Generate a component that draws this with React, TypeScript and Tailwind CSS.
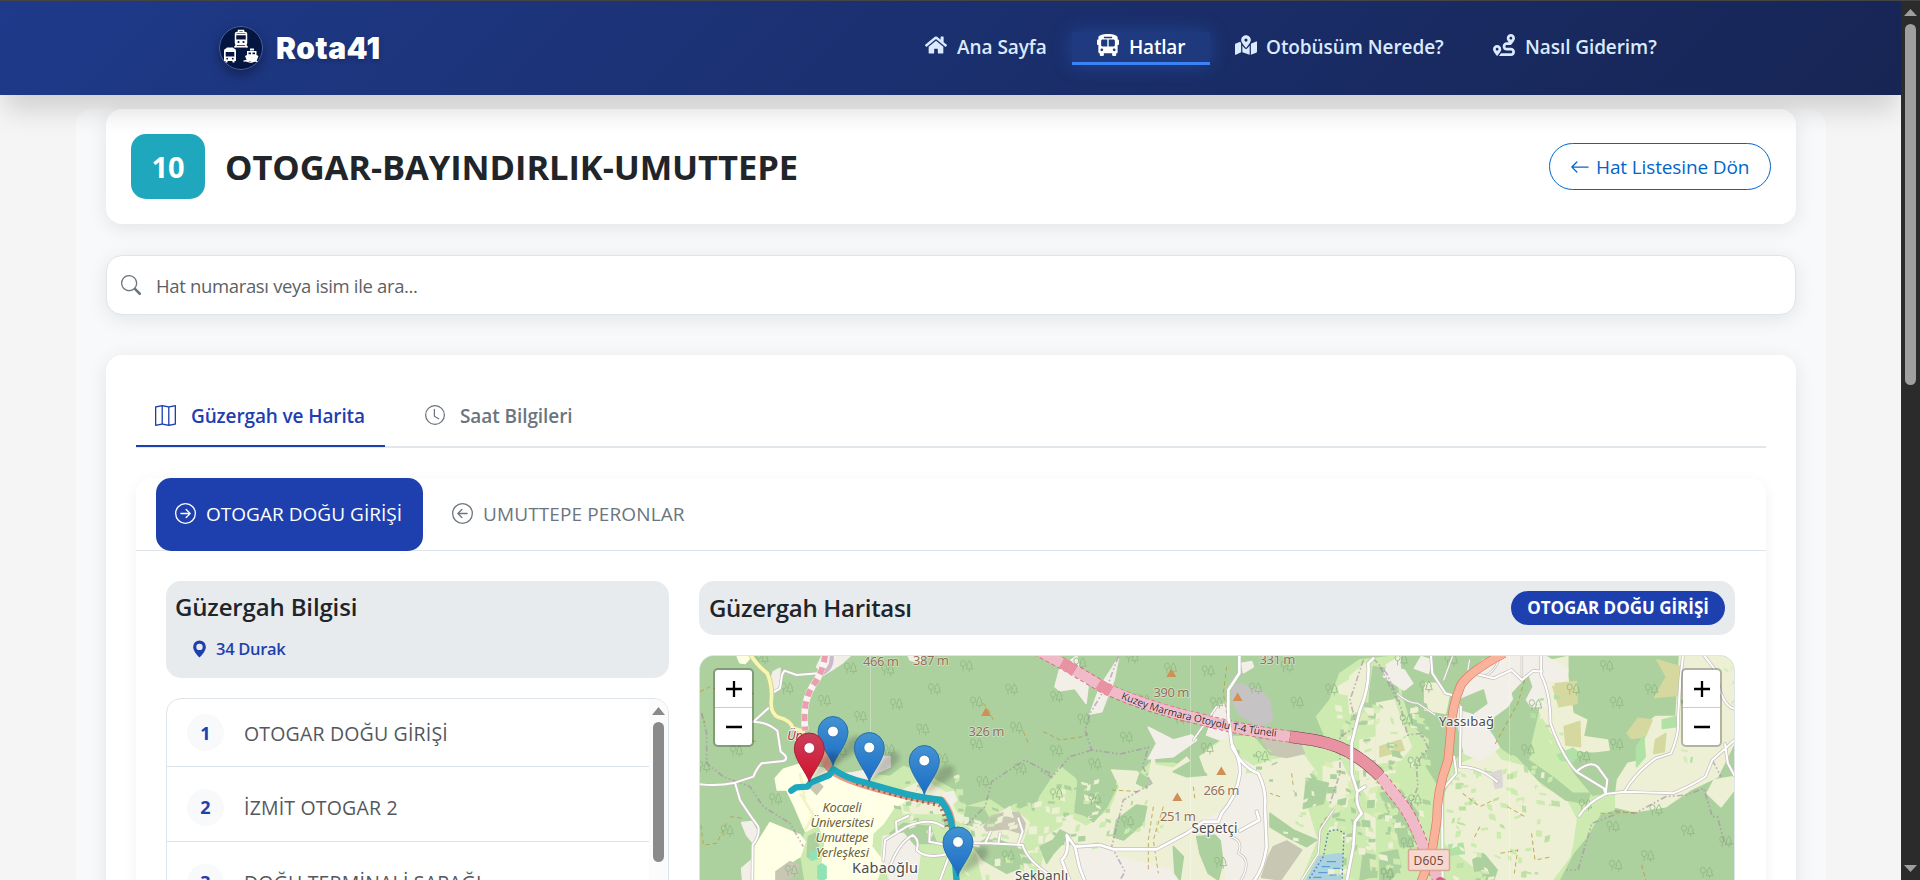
import React from "react";
import { FaHome, FaBusAlt, FaMapMarkedAlt, FaRoute } from "react-icons/fa";
import {
  BsArrowLeft,
  BsSearch,
  BsMap,
  BsClock,
  BsArrowRightCircle,
  BsArrowLeftCircle,
  BsGeoAltFill,
} from "react-icons/bs";

type Poly = [string, string];
type Pt = [number, number];

const WEST = "translate(690 560) scale(0.33333)";
const MID = "translate(1040 640) scale(0.33333)";
const EAST = "translate(1380 560) scale(0.34438 0.33333)";

const FARM = "#eef0d5";
const LIME = "#cdebb0";
const WOOD = "#add19e";
const HOUSE = "#f2efe9";
const CAMPUS = "#ffffe5";
const SCRUB = "#d6d99f";
const STONE = "#c7c7b4";

const landWest: Poly[] = [
  [LIME, "440,655 520,640 600,650 640,620 700,640 790,690 830,740 900,720 960,760 1010,740 1080,800 1110,960 560,960 540,760"],
  [FARM, "620,700 700,660 770,700 800,760 880,790 960,740 1010,780 1080,850 1100,960 880,960 840,800 760,760 640,760"],
  [WOOD, "830,740 880,745 900,780 860,800 820,790"],
  [WOOD, "900,830 980,860 1000,920 950,940 880,900 850,860"],
  [WOOD, "600,820 640,790 720,800 740,850 690,850 620,880"],
  [CAMPUS, "256,655 280,628 330,612 400,625 440,640 480,640 560,672 620,700 645,722 610,745 580,790 548,820 545,860 580,905 560,960 345,960 350,890 375,870 340,800 312,735 290,690 262,690"],
  [LIME, "345,820 385,800 400,850 385,960 345,960 330,870"],
  [WOOD, "355,830 375,820 385,860 370,900 352,890"],
  [CAMPUS, "195,860 240,788 330,825 345,845 330,890 275,925 258,960 195,960"],
  [HOUSE, "250,335 270,325 268,380 248,392 242,360"],
  [HOUSE, "155,788 185,785 205,820 190,850 170,825"],
  [HOUSE, "155,925 185,900 190,960 158,960"],
  [HOUSE, "395,290 480,288 455,310 425,330 400,345 380,320"],
  [HOUSE, "655,288 700,288 690,308 660,300"],
  [HOUSE, "480,640 530,630 560,590 600,590 600,620 560,640 530,665 490,660"],
  [HOUSE, "580,830 640,820 690,880 680,960 600,960 575,900"],
  [HOUSE, "760,700 790,695 800,720 780,740"],
  [STONE, "882,800 905,768 980,748 1005,790 1000,822 950,806 890,812"],
  [STONE, "258,935 300,905 325,915 320,945 285,960 258,960"],
  [STONE, "358,680 385,668 398,680 380,703"],
  ["#8fe3b4", "360,878 380,872 382,895 362,900"],
  ["#8fe3b4", "384,918 396,912 408,920 408,955 396,960 384,955"],
  [CAMPUS, "142,290 185,288 165,310 150,308"],
];

const landMid: Poly[] = [
  [LIME, "0,470 60,380 110,420 100,520 160,540 200,470 230,430 300,400 330,370 400,370 500,400 500,330 560,290 640,290 690,350 800,300 860,300 830,230 870,180 900,100 960,60 1080,47 1100,720 0,720 -60,640"],
  [FARM, "140,560 210,510 240,440 215,390 290,395 325,425 340,335 345,375 400,385 440,352 470,395 500,405 480,350 515,325 565,290 580,340 640,380 700,360 790,345 830,400 800,500 830,600 780,720 0,720 20,590 100,540"],
  [FARM, "930,110 975,70 985,120 960,210 930,220 925,160"],
  [FARM, "895,140 930,120 930,165 900,160"],
  [FARM, "960,300 1020,290 1060,330 1080,420 1080,520 1000,500 960,430"],
  [FARM, "850,380 900,360 930,420 920,500 870,500 850,440"],
  [FARM, "975,520 1050,560 1070,640 1020,650 980,600"],
  [WOOD, "105,390 180,350 230,440 200,500 160,545 105,500 120,450"],
  [WOOD, "400,395 460,360 500,405 440,410"],
  [WOOD, "300,400 330,420 320,445 290,430"],
  [WOOD, "470,590 540,585 555,640 535,720 505,700 480,640"],
  [WOOD, "800,415 865,430 850,490 790,505"],
  [WOOD, "690,520 760,570 830,600 800,620 740,590 690,560"],
  [WOOD, "1000,80 1060,90 1075,160 1040,240 985,230 990,150"],
  [WOOD, "230,540 290,495 320,500 310,550 250,600 220,590"],
  [WOOD, "970,640 1020,650 1030,700 960,720"],
  [WOOD, "0,620 40,600 60,570 90,585 40,640 20,670"],
  [WOOD, "400,620 430,650 420,720 405,700"],
  [HOUSE, "45,140 60,85 110,48 120,100 145,130 138,190 105,145 60,152"],
  [HOUSE, "150,222 180,140 235,55 222,120 185,215"],
  [HOUSE, "325,262 400,300 455,285 470,300 435,325 400,350 325,357 350,310"],
  [HOUSE, "500,285 530,200 560,190 570,290 540,300"],
  [HOUSE, "605,70 635,65 640,80 610,98"],
  [HOUSE, "590,350 640,380 665,420 670,480 665,560 680,640 650,720 560,720 545,600 490,540 540,520 595,450"],
  [HOUSE, "110,620 215,630 230,650 390,690 410,720 125,720"],
  [HOUSE, "1040,75 1080,50 1080,140 1050,120"],
  ["#c5c3c3", "575,140 600,133 660,150 690,185 697,240 660,260 600,225 580,190"],
  [STONE, "665,300 780,310 793,340 740,352 700,345"],
  [STONE, "700,620 740,603 785,630 722,720 665,712 685,650"],
  [STONE, "980,365 1045,358 1050,375 1000,385"],
  [SCRUB, "1020,320 1070,300 1080,330 1040,350"],
  ["#aad3df", "838,650 906,640 900,720 800,720"],
];

const landEast: Poly[] = [
  [LIME, "-10,470 60,400 90,500 140,540 130,620 190,720 200,620 260,560 340,560 380,590 440,560 470,430 520,560 560,640 600,690 640,740 600,800 560,880 520,960 -10,960"],
  [FARM, "-10,430 40,420 60,480 90,560 60,600 -10,610"],
  [FARM, "190,700 240,610 330,570 350,600 420,620 470,680 540,720 575,790 550,890 500,960 320,960 190,850"],
  [FARM, "455,440 480,380 500,300 545,290 545,350 560,460 600,480 590,530 660,540 665,570 620,575 540,570 500,520"],
  [FARM, "680,740 690,660 720,610 765,600 775,490 800,470 860,470 870,288 1028,288 1028,550 980,650 900,690 830,740 740,755"],
  [FARM, "130,370 170,370 200,410 190,460 130,450"],
  [HOUSE, "20,320 70,330 95,370 70,390 10,350"],
  [HOUSE, "100,325 120,290 150,300 140,340"],
  [HOUSE, "215,440 225,400 250,350 300,300 360,288 480,288 545,330 540,360 490,380 490,440 440,440 400,390 370,440 330,470 315,510 350,560 290,600 245,580"],
  [WOOD, "230,420 300,390 310,430 270,460 240,450"],
  [WOOD, "385,400 430,350 440,380 420,420 445,460 420,470 395,440"],
  [WOOD, "330,520 380,510 440,560 430,600 500,650 560,700 610,700 600,730 540,720 460,660 400,590 350,560"],
  [WOOD, "560,600 610,610 680,590 660,680 600,650"],
  [WOOD, "1,700 60,690 110,760 100,820 120,860 60,860 40,790"],
  [WOOD, "0,880 50,870 60,920 30,960 0,960"],
  [WOOD, "270,900 300,880 340,930 330,960 280,960"],
  [SCRUB, "805,300 870,320 872,405 798,412 832,350"],
  [SCRUB, "718,520 750,475 790,480 770,530 730,535"],
  [SCRUB, "500,372 570,365 572,430 520,440"],
  [SCRUB, "535,500 580,485 582,560 540,555"],
  [SCRUB, "0,560 60,540 70,570 0,590"],
  [SCRUB, "800,540 830,520 825,575 795,580"],
  ["#b0e2a5", "515,585 560,565 580,580 560,605 525,600"],
  ["#b0e2a5", "745,560 765,530 770,590 745,620"],
  ["#b0e2a5", "820,480 860,470 860,500 820,505"],
  ["#b0e2a5", "200,855 240,850 245,880 205,885"],
  ["#dcd6d6", "325,640 352,630 355,680 335,685"],
  [FARM, "970,660 1028,650 1028,690 990,740 950,700"],
  [LIME, "575,770 620,710 680,700 680,750 640,760 600,830 560,880"],
];

const roadsWest = [
  "M190,485L235,445",
  "M190,485Q230,485 262,512L272,575Q300,595 280,603L215,610Q200,625 190,650L135,668Q80,680 25,672",
  "M135,668L150,720Q175,760 205,800Q210,830 188,855L187,965",
  "M245,400L270,385L276,345L283,332L320,345L385,340",
  "M600,920Q625,850 668,825Q690,840 680,870Q710,900 780,880L810,850",
  "M810,850L900,850L998,855Q1010,900 1080,945",
  "M580,900L585,840L650,800Q720,770 760,800",
  "M620,815L618,785L655,768",
  "M720,800L718,845L770,855",
  "M885,850L902,815M925,850L930,820M985,850L998,815L985,775",
  "M780,880L750,960",
];
const roadsMid = [
  "M598,47L598,100L565,150L565,230L575,310Q602,360 600,400Q590,470 545,520L535,545L490,545L440,580L350,628L220,628L180,615L105,620L80,585Q90,640 65,660L90,725",
  "M105,620L118,680L135,725",
  "M575,320Q610,385 655,400Q680,450 675,500L680,620Q670,690 640,725",
  "M650,515L658,540L600,572",
  "M1000,55L985,70Q990,140 960,210L935,310L935,400L952,455Q945,490 965,520L945,545L940,620L920,725",
  "M952,455L975,440",
];
const roadsMidThin = [
  "M880,510L840,570L835,640L782,725",
  "M570,590Q612,600 595,640Q640,660 600,725",
  "M460,300L530,200",
];
const roadsEast = [
  "M468,285L468,345Q495,400 495,490Q530,590 570,635L650,685L655,702Q600,730 578,768",
  "M570,635Q610,600 632,620L660,660L655,702L710,695L760,697L850,700Q900,680 945,650L965,600L1030,540",
  "M710,695Q740,640 800,595L845,580Q870,520 865,480L872,360L880,285",
  "M940,285L970,325L990,400Q1005,440 1030,447",
  "M1002,552L1010,610L1030,648",
  "M148,285L152,340L190,400L208,405",
  "M270,340L330,355L382,330L412,360L445,332L470,335",
  "M235,440L232,620Q290,620 340,665",
  "M215,590L222,640L180,690L182,965",
];
const roadsEastThin = [
  "M260,300L255,330M412,285L412,350M345,300Q330,340 300,350",
  "M210,290L185,360M50,400Q80,430 110,430L160,465",
];

const boundaries: [string, string][] = [
  [WEST, "M35,460L50,520L50,610L100,650L180,680L220,740L300,790L340,860"],
  [WEST, "M1080,640L1005,600L905,665L885,740L830,795"],
  [MID, "M235,50L205,130L150,220L135,270L155,330L240,342L325,322L308,380L335,430L250,480L235,540L215,620L255,695L240,720"],
  [MID, "M155,330L90,350L35,412L0,390"],
  [MID, "M970,60L930,180L950,260L900,290L900,400L870,490"],
  [MID, "M1000,55L1040,100L1080,190"],
  [EAST, "M0,320L60,440L80,525L120,520L140,565L105,610L110,680L80,760"],
  [EAST, "M680,752L740,760L830,710L890,705L940,685L965,770L980,770L1000,850L1028,850"],
  [EAST, "M680,765L615,790L575,930L540,930"],
  [EAST, "M965,600L990,650"],
];
const tracks: [string, string][] = [
  [WEST, "M30,395L60,380L110,400L125,470L160,460M130,360L170,400L200,400M140,500L170,540L200,545M35,460L45,490M120,770L160,775M110,790L80,850L40,855L32,790"],
  [WEST, "M880,430L895,450L910,480M1000,515L1015,550"],
  [MID, "M10,275L60,300L130,290L150,275M560,80L550,160L560,220M340,500L325,600L325,690M370,500L340,600L355,700M215,450L300,455M460,440L465,480M755,400L760,440M720,470L690,460M860,530L840,560"],
  [EAST, "M240,700L290,740L330,720M350,880L400,870L390,940M440,820L450,900L500,890M290,800L270,840M370,740L420,770M760,915L772,960M640,760L740,757M420,360L400,430L330,560"],
];

const treesWest: Pt[] = [[480,325],[592,330],[290,385],[402,422],[510,470],[618,432],[732,387],[828,318],[858,427],[963,388],[697,508],[978,503],[858,553],[755,597],[877,665],[990,627],[255,717],[110,812],[138,573],[953,888],[303,932],[595,570],[450,575],[40,620],[215,295]];
const treesMid: Pt[] = [[48,170],[130,238],[48,332],[258,292],[503,93],[390,85],[770,187],[873,148],[163,372],[163,478],[48,462],[262,545],[528,188],[500,325],[665,350],[740,80],[540,668],[1040,703],[275,52],[118,70],[420,235],[310,180],[645,145]];
const treesEast: Pt[] = [[657,318],[686,427],[787,388],[560,388],[686,553],[428,570],[98,607],[675,800],[683,917],[776,888],[892,812],[947,938],[1003,845],[800,750],[132,380],[75,480],[595,735],[450,435],[590,590],[100,720],[78,850],[20,940],[60,300],[205,300]];

function rng(seed: number) {
  let s = seed;
  return () => {
    s = (s * 16807) % 2147483647;
    return s / 2147483647;
  };
}

type Zone = { x: number; y: number; w: number; h: number; n: number; size: number; colors: string[] };
const zones: Zone[] = [
  { x: 1325, y: 700, w: 66, h: 180, n: 130, size: 8, colors: [LIME, FARM, WOOD, "#dcecb8", WOOD, FARM] },
  { x: 1388, y: 700, w: 38, h: 180, n: 60, size: 7, colors: [LIME, FARM, WOOD, LIME] },
  { x: 1446, y: 765, w: 110, h: 115, n: 120, size: 7, colors: [LIME, FARM, LIME, "#bfe0a4", FARM] },
  { x: 1235, y: 740, w: 40, h: 40, n: 14, size: 6, colors: [LIME, WOOD] },
  { x: 1280, y: 760, w: 40, h: 80, n: 22, size: 5, colors: [LIME, FARM, WOOD] },
  { x: 1045, y: 775, w: 55, h: 70, n: 40, size: 7, colors: [LIME, FARM, WOOD] },
  { x: 1105, y: 800, w: 60, h: 40, n: 14, size: 5, colors: [LIME, "#b9dba1"] },
  { x: 955, y: 800, w: 90, h: 78, n: 60, size: 8, colors: [LIME, FARM, WOOD, FARM] },
  { x: 893, y: 775, w: 70, h: 60, n: 30, size: 7, colors: [LIME, WOOD, FARM] },
  { x: 1680, y: 665, w: 54, h: 100, n: 22, size: 6, colors: ["#d2ecbd", "#e3eecb", "#b0e2a5"] },
  { x: 1530, y: 680, w: 30, h: 60, n: 14, size: 5, colors: [LIME, "#b0e2a5", FARM] },
];
const patches = zones.flatMap((z, zi) => {
  const r = rng(71 + zi * 137);
  return Array.from({ length: z.n }, () => {
    const x = z.x + r() * z.w;
    const y = z.y + r() * z.h;
    const a = z.size * (0.4 + r() * 0.8);
    const b = z.size * (0.3 + r() * 0.7);
    const k = (r() - 0.5) * 5;
    const fill = z.colors[Math.floor(r() * z.colors.length)];
    return { fill, pts: `${x},${y} ${x + a},${y + k} ${x + a + k * 0.6},${y + b + k} ${x + k * 0.5},${y + b}` };
  });
});

function Land({ at, items }: { at: string; items: Poly[] }) {
  return (
    <g transform={at}>
      {items.map(([fill, pts], i) => (
        <polygon key={i} points={pts} fill={fill} stroke={fill} strokeWidth={5} strokeLinejoin="round" />
      ))}
    </g>
  );
}

function Roads({ at, items, w }: { at: string; items: string[]; w: number }) {
  const d = items.join("");
  return (
    <g transform={at} fill="none" strokeLinejoin="round" strokeLinecap="round">
      <path d={d} stroke="#c3beb9" strokeWidth={w + 4} />
      <path d={d} stroke="#ffffff" strokeWidth={w} />
    </g>
  );
}

function Trees({ at, items }: { at: string; items: Pt[] }) {
  return (
    <g transform={at} fill="none" stroke="#8fb783" strokeWidth={2.4} strokeLinejoin="round">
      {items.map(([x, y], i) => (
        <g key={i} transform={`translate(${x} ${y})`}>
          <ellipse cx={-9} cy={-7} rx={7.5} ry={9} />
          <path d="M-9,2V16M10,-17L2,-2L5,-2L0,9L20,9L15,-2L18,-2ZM10,9V18" />
        </g>
      ))}
    </g>
  );
}

function Pin({ x, y, red }: { x: number; y: number; red?: boolean }) {
  return (
    <g transform={`translate(${x} ${y})`}>
      <path d="M0 0L12 -22Q20 -33 29 -28Q33 -20 20 -12Z" fill="#222222" opacity="0.24" filter="url(#pinShade)" />
      <path
        d="M0 0C-1.800 -8 -15 -22 -15 -33.500A15 15.500 0 0 1 15 -33.500C15 -22 1.800 -8 0 0Z"
        fill={red ? "url(#pinRed)" : "url(#pinBlue)"}
        stroke={red ? "#a8213b" : "#2b6fa8"}
        strokeWidth="1"
      />
      <circle cx="0" cy="-34" r="5.400" fill="#ffffff" stroke={red ? "#a8213b" : "#2467a3"} strokeWidth="0.800" />
    </g>
  );
}

function Peak({ x, y }: { x: number; y: number }) {
  return <path d={`M${x - 5},${y + 4}L${x},${y - 4.5}L${x + 5},${y + 4}Z`} fill="#d08f55" />;
}

const heights: [string, number, number, number][] = [
  ["466 m", 881, 666, 36],
  ["387 m", 931, 665, 36],
  ["326 m", 986.5, 736, 36],
  ["390 m", 1171.5, 696.500, 36],
  ["331 m", 1277.5, 664, 36],
  ["266 m", 1221.5, 794.500, 36],
  ["251 m", 1178, 820.500, 36],
];

function RouteMap() {
  const tunnel = "M-45,8L0,34L85,80L195,145Q330,205 480,237Q600,270 750,290L820,300Q900,315 950,350Q985,372 1020,408L1082,486Q1120,535 1150,620L1185,700L1220,760";
  return (
    <svg viewBox="700 656 1034 224" className="block h-[224px] w-[1034px]">
      <defs>
        <linearGradient id="pinBlue" x1="0" y1="0" x2="0" y2="1">
          <stop offset="0" stopColor="#4393d3" />
          <stop offset="1" stopColor="#1a6cc4" />
        </linearGradient>
        <linearGradient id="pinRed" x1="0" y1="0" x2="0" y2="1">
          <stop offset="0" stopColor="#c9405a" />
          <stop offset="1" stopColor="#d4102d" />
        </linearGradient>
        <filter id="pinShade" x="-50%" y="-50%" width="200%" height="200%">
          <feGaussianBlur stdDeviation="2.500" />
        </filter>
        <path id="tunnelLabel" d="M242,176Q350,222 480,248Q600,280 740,294" />
      </defs>
      <rect x="700" y="656" width="1034" height="224" fill={WOOD} />
      <Land at={WEST} items={landWest} />
      <Land at={MID} items={landMid} />
      <Land at={EAST} items={landEast} />
      {patches.map((p, i) => (
        <polygon key={i} points={p.pts} fill={p.fill} />
      ))}
      <Trees at={WEST} items={treesWest} />
      <Trees at={MID} items={treesMid} />
      <Trees at={EAST} items={treesEast} />
      {tracks.map(([at, d], i) => (
        <path key={i} transform={at} d={d} fill="none" stroke="#b99a3c" strokeWidth={3} strokeDasharray="13 9" opacity="0.8" />
      ))}
      {boundaries.map(([at, d], i) => (
        <path key={i} transform={at} d={d} fill="none" stroke="#a48aa8" strokeWidth={5} strokeDasharray="18 7 5 7 5 7" opacity="0.6" />
      ))}

      <g transform={MID} fill="none">
        <path d="M802,725L850,650L865,575L888,568L912,578L906,725" stroke="#5a74c8" strokeWidth={4} strokeDasharray="5 7" />
        <path d="M860,665H888M845,680H870M880,685H900M835,698H862M868,705H890M820,712H845" stroke="#4a90d8" strokeWidth={3} />
      </g>

      <Roads at={WEST} items={roadsWest} w={6} />
      <Roads at={MID} items={roadsMidThin} w={4} />
      <Roads at={EAST} items={roadsEastThin} w={3} />
      <g transform={WEST} fill="none" strokeLinejoin="round">
        <path d="M182,285Q200,315 232,340Q248,380 244,420Q240,460 265,472Q300,480 310,505L345,515" stroke="#c9c88a" strokeWidth={15} />
        <path d="M182,285Q200,315 232,340Q248,380 244,420Q240,460 265,472Q300,480 310,505L345,515" stroke="#f6f6b5" strokeWidth={11} />
        <path d="M425,288Q428,330 390,342" stroke="#c9b9c9" strokeWidth={12} />
        <path d="M405,285Q400,335 370,375Q335,425 346,512" stroke="#fbf3f3" strokeWidth={20} />
        <path d="M405,285Q400,335 370,375Q335,425 346,512" stroke="#eb9fae" strokeWidth={18} strokeDasharray="22 16" />
        <path d="M395,560Q400,620 440,640Q480,665 600,695Q700,720 755,722Q785,760 785,800" stroke="#e79a84" strokeWidth={24} />
        <path d="M330,700L370,765L345,812M330,640L345,720" stroke="#f3f3c8" strokeWidth={8} />
      </g>

      <g transform={MID} fill="none" strokeLinejoin="round">
        <path d={tunnel} stroke="#d9657f" strokeWidth={36} strokeDasharray="12 8" />
        <path d={tunnel} stroke="#f1bac8" strokeWidth={31} />
        <path d="M750,290L820,300Q900,315 950,350Q985,372 1020,408" stroke="#6f4450" strokeWidth={37} />
        <path d="M65,68L105,92M175,132L212,154M750,290L820,300Q900,315 950,350Q985,372 1020,408" stroke="#e892a2" strokeWidth={34} />
      </g>
      <Roads at={MID} items={roadsMid} w={8} />
      <Roads at={EAST} items={roadsEast} w={6} />
      <g transform={EAST} fill="none">
        <path d="M360,280Q260,335 235,375Q208,440 205,520L198,600Q165,690 165,780L150,880L120,965" stroke="#dc7b62" strokeWidth={27} />
        <path d="M360,280Q260,335 235,375Q208,440 205,520L198,600Q165,690 165,780L150,880L120,965" stroke="#f9b29c" strokeWidth={23} />
        <circle cx={175} cy={965} r={14} fill="#e05c85" />
      </g>
      <path d="M870.500 656V880M1190.500 656V880M1509.500 656V880" stroke="#ffffff" strokeWidth="0.700" opacity="0.4" />

      <g fontFamily="'Noto Sans', 'Open Sans', sans-serif" textAnchor="middle" paintOrder="stroke" strokeLinejoin="round">
        {[[986, 712], [1171.3, 673], [1237.6, 697], [1221.3, 771], [1177.3, 797]].map(([x, y]) => (
          <Peak key={x} x={x} y={y} />
        ))}
        {heights.map(([t, x, y, w]) => (
          <text key={t} x={x} y={y} fontSize="13" textLength={w} fill="#946f5b" stroke="#ffffff" strokeOpacity="0.45" strokeWidth="1.500">
            {t}
          </text>
        ))}
        <text x="795" y="740" fontSize="12.500" fontStyle="italic" fill="#b8304a" stroke="#ffffff" strokeOpacity="0.7" strokeWidth="2">Ün</text>
        <g fontSize="13" fontStyle="italic" fill="#6d6434" stroke="#ffffff" strokeOpacity="0.7" strokeWidth="2">
          <text x="842" y="812" textLength="39">Kocaeli</text>
          <text x="842" y="827" textLength="63">Üniversitesi</text>
          <text x="842" y="842" textLength="53">Umuttepe</text>
          <text x="842.500" y="857" textLength="53">Yerleşkesi</text>
        </g>
        <g fill="#4d4d4d" stroke="#ffffff" strokeOpacity="0.7" strokeWidth="2.400">
          <text x="885" y="873" fontSize="14.500" textLength="66">Kabaoğlu</text>
          <text x="1041.500" y="879.500" fontSize="13" textLength="53">Sekbanlı</text>
          <text x="1214.500" y="833" fontSize="13.500" textLength="46">Sepetçi</text>
          <text x="1466.500" y="725.500" fontSize="13" textLength="55">Yassıbağ</text>
        </g>
      </g>
      <g transform={MID} fontFamily="'Noto Sans', sans-serif" fontSize="31" fill="#43303a" stroke="#f6d5de" strokeWidth="3" paintOrder="stroke">
        <text textLength="482">
          <textPath href="#tunnelLabel">Kuzey Marmara Otoyolu T-4 Tüneli</textPath>
        </text>
      </g>
      <g>
        <rect x="1408.500" y="849.500" width="41" height="21" rx="1.500" fill="#f6d8ce" stroke="#dba596" strokeWidth="1.500" />
        <text x="1428.500" y="864.500" textAnchor="middle" fontFamily="'Noto Sans', sans-serif" fontSize="12" textLength="30" fill="#7a4a40">D605</text>
      </g>

      <g transform={WEST} fill="none" strokeLinecap="round" strokeLinejoin="round">
        <path d="M500,668Q600,700 660,715L750,735Q765,760 772,800" stroke="#8c4a3a" strokeWidth={14} strokeDasharray="6 11" opacity="0.75" strokeLinecap="butt" />
        <path d="M304,692L318,682L352,680L362,668L418,645L430,628Q470,655 520,666L610,692Q680,712 752,720Q785,762 787,810L800,965" stroke="#1fa8bd" strokeWidth={19} />
      </g>
      <Pin x={833} y={765.500} />
      <Pin x={809.300} y={782} red />
      <Pin x={869.300} y={781.500} />
      <Pin x={924.300} y={794.500} />
      <Pin x={958} y={876} />
    </svg>
  );
}

function ZoomControl() {
  return (
    <div className="w-[41px] overflow-hidden rounded-[5px] border-2 border-black/25 bg-white bg-clip-padding">
      {["M1 8H17M9 0V16", "M1 8H17"].map((d, i) => (
        <div key={d} className={`flex items-center justify-center ${i === 0 ? "h-[38px] border-b border-[#cccccc]" : "h-[37px]"}`}>
          <svg viewBox="0 0 18 16" className="h-[16px] w-[18px]">
            <path d={d} stroke="#000000" strokeWidth="2.300" fill="none" />
          </svg>
        </div>
      ))}
    </div>
  );
}

function Logo() {
  return (
    <svg viewBox="0 0 44 44" className="h-[44px] w-[44px] rounded-full shadow-[0_5px_12px_rgba(0,0,0,0.35)]">
      <circle cx="22" cy="22" r="21.500" fill="#041640" stroke="#4b66a8" strokeWidth="1" />
      <g fill="none" stroke="#ffffff" strokeWidth="1.500">
        <rect x="16.500" y="6.500" width="11" height="12" rx="1.500" />
        <path d="M19.500 6V4.500H24.500V6M17 8.500H27M17.500 19L15.500 21.500M26.500 19L28.500 21.500M16.500 20.700H27.500" />
      </g>
      <path d="M16.500 13.500H27.500V18.500H16.500Z" fill="#ffffff" />
      <circle cx="19.500" cy="16" r="1.100" fill="#041640" />
      <circle cx="24.500" cy="16" r="1.100" fill="#041640" />
      <path d="M5 25Q5 22.500 7 22.500L8 21.500H14L15 22.500Q17 22.500 17 25V35H15.500V36.500H13.500V35H8.500V36.500H6.500V35H5Z" fill="#ffffff" />
      <path d="M6.700 26H15.300V30.500H6.700Z" fill="#041640" />
      <circle cx="8.200" cy="32.700" r="0.900" fill="#041640" />
      <circle cx="13.800" cy="32.700" r="0.900" fill="#041640" />
      <path d="M31 22.500H35V24.500H31ZM28 25H37.500V29L39.500 30L37.500 35H28L26 30L28 29ZM24.500 34.500Q27 33.500 29 34.800Q31 36 33 34.800Q36 33.500 38.500 35V36.200Q36 35.200 33.500 36.500Q31 37.200 28.500 36Q27 35.200 24.500 35.800Z" fill="#ffffff" />
      <path d="M29.500 26.500H32V28.300H29.500ZM33.500 26.500H36V28.300H33.500Z" fill="#041640" />
    </svg>
  );
}

const stops = ["OTOGAR DOĞU GİRİŞİ", "İZMİT OTOGAR 2", "DOĞU TERMİNALİ SAPAĞI"];

export default function App() {
  return (
    <div className="flex h-[880px] w-[1920px] flex-col overflow-hidden border-t border-[#444444] bg-[#f5f5f5] font-['Open_Sans','Noto_Sans',sans-serif] text-[#212529]">
      <div className="flex min-h-0 flex-1">
        <div className="flex w-[1901px] flex-col overflow-hidden">
          <header className="relative z-10 flex h-[94px] shrink-0 items-center bg-linear-135 from-[#1e3a8a] to-[#172554] pl-[219px] shadow-[0_20px_25px_-5px_rgba(0,0,0,0.15)]">
            <div className="flex w-[681px] items-center gap-[13px]">
              <Logo />
              <span className="font-['Inter',sans-serif] text-[30px] leading-none font-black tracking-[0.5px] text-white [text-shadow:0_2px_4px_rgba(0,0,0,0.2)]">
                Rota41
              </span>
            </div>
            <nav className="flex h-[33px] items-center text-[19px] font-semibold whitespace-nowrap text-[#dbeafe]">
              <a className="flex h-[33px] w-[172px] items-center px-[25px] pb-[3px]">
                <FaHome className="mr-[10px] mb-[4px] h-[20px] w-[22px] shrink-0" />
                <span className="pt-[1px] tracking-[-0.05px]">Ana Sayfa</span>
              </a>
              <a className="flex h-[33px] w-[138px] items-center border-b-3 border-[#3b82f6] bg-[#3b82f6]/15 px-[25px] text-white shadow-[0_0_20px_rgba(59,130,246,0.3)]">
                <FaBusAlt className="mr-[10px] mb-[4px] h-[22px] w-[22px] shrink-0" />
                <span className="pt-[1px] tracking-[-0.2px]">Hatlar</span>
              </a>
              <a className="flex h-[33px] w-[258px] items-center px-[25px] pb-[3px]">
                <FaMapMarkedAlt className="mr-[9px] mb-[4px] h-[20px] w-[22px] shrink-0" />
                <span className="pt-[1px] tracking-[-0.07px]">Otobüsüm Nerede?</span>
              </a>
              <a className="flex h-[33px] items-center px-[25px] pb-[3px]">
                <FaRoute className="mr-[10px] mb-[4px] h-[22px] w-[22px] shrink-0" />
                <span className="pt-[1px] tracking-[-0.08px]">Nasıl Giderim?</span>
              </a>
            </nav>
          </header>

          <main className="mt-[14px] ml-[76px] h-[1000px] w-[1750px] shrink-0 rounded-[16px] bg-[#f8f9fb] px-[30px]">
            <section className="flex h-[115px] items-center rounded-[16px] bg-white px-[25px] shadow-[0_4px_20px_rgba(0,0,0,0.09)]">
              <div className="flex h-[65px] w-[74px] items-center justify-center rounded-[15px] bg-[#1fa8bd] pt-[1px] text-[29px] font-bold text-white">10</div>
              <h1 className="ml-[20px] pt-[2px] text-[34.500px] leading-none font-bold tracking-[-0.08px] whitespace-nowrap">OTOGAR-BAYINDIRLIK-UMUTTEPE</h1>
              <button className="ml-auto flex h-[47px] w-[222px] items-center rounded-full border border-[#0066cc] pl-[20px] text-[19px] whitespace-nowrap text-[#0066cc]">
                <BsArrowLeft className="mr-[6px] h-[20px] w-[20px]" />
                <span className="pt-[2px] tracking-[-0.13px]">Hat Listesine Dön</span>
              </button>
            </section>

            <section className="mt-[31px] flex h-[60px] items-center rounded-[16px] border border-[#dee5eb] bg-white pl-[14px] shadow-[0_4px_20px_rgba(0,0,0,0.09)]">
              <BsSearch className="h-[20px] w-[20px] text-[#6c757d]" />
              <span className="ml-[15px] pt-[2px] text-[18.500px] tracking-[-0.34px] text-[#5d6166]">Hat numarası veya isim ile ara...</span>
            </section>

            <section className="mt-[40px] h-[700px] rounded-[16px] bg-white px-[30px] pt-[30px] shadow-[0_4px_20px_rgba(0,0,0,0.09)]">
              <div className="flex h-[63px] border-b-2 border-[#e2e7eb] text-[19px] font-semibold whitespace-nowrap">
                <div className="flex h-[62px] w-[249px] items-center border-b-2 border-[#1e40af] pl-[19px] text-[#1e40af]">
                  <BsMap className="mr-[15px] h-[21px] w-[21px]" />
                  <span className="pt-[2px] tracking-[-0.12px]">Güzergah ve Harita</span>
                </div>
                <div className="flex h-[60px] items-center pl-[40px] text-[#6c757d]">
                  <BsClock className="mr-[15px] h-[20px] w-[20px]" />
                  <span className="pt-[2px] tracking-[-0.08px]">Saat Bilgileri</span>
                </div>
              </div>

              <div className="mt-[30px] h-[600px] rounded-[16px] bg-white shadow-[0_4px_15px_rgba(0,0,0,0.06)]">
                <div className="flex h-[73px] border-b border-[#dee5ea] pl-[20px] text-[19px] whitespace-nowrap">
                  <div className="flex h-[73px] w-[267px] items-center rounded-[15px] bg-[#1e40af] pb-[2px] pl-[19px] text-white">
                    <BsArrowRightCircle className="mr-[10px] h-[21px] w-[21px] shrink-0" />
                    <span className="pt-[2px] tracking-[0.03px]">OTOGAR DOĞU GİRİŞİ</span>
                  </div>
                  <div className="flex items-center pb-[1px] pl-[29px] text-[#6c757d]">
                    <BsArrowLeftCircle className="mr-[10px] h-[21px] w-[21px] shrink-0" />
                    <span className="pt-[2px] tracking-[0.12px]">UMUTTEPE PERONLAR</span>
                  </div>
                </div>

                <div className="flex gap-[30px] px-[30px] pt-[30px]">
                  <div className="w-[503px] shrink-0">
                    <div className="h-[97px] rounded-[15px] bg-[#e7ebee] px-[9px] pt-[10px]">
                      <h2 className="text-[24px] leading-[32px] font-semibold tracking-[-0.15px]">Güzergah Bilgisi</h2>
                      <div className="mt-[16px] ml-[16px] flex items-center text-[16.500px] leading-[20px] font-semibold text-[#1e40af]">
                        <BsGeoAltFill className="mr-[8px] h-[18px] w-[17px]" />
                        <span className="tracking-[-0.3px]">34 Durak</span>
                      </div>
                    </div>
                    <div className="mt-[20px] flex h-[300px] overflow-hidden rounded-[15px] border border-[#dee5ea]">
                      <ul className="flex-1">
                        {stops.map((name, i) => (
                          <li key={name} className={`flex items-center border-b border-[#dee5ea] pl-[20px] ${i === 0 ? "h-[68px]" : "h-[75px] pt-[6px]"}`}>
                            <span className="flex h-[37px] w-[37px] items-center justify-center rounded-full bg-[#f8f9fb] pt-[1px] text-[18px] font-bold text-[#1e40af]">{i + 1}</span>
                            <span className="ml-[20px] pt-[2px] text-[19.500px] font-medium tracking-[0.18px] text-[#54585c]">{name}</span>
                          </li>
                        ))}
                      </ul>
                      <div className="flex w-[19px] flex-col items-center bg-[#fbfbfb] pt-[8px]">
                        <svg viewBox="0 0 13 8" className="h-[8px] w-[13px]"><path d="M0 8L6.500 0L13 8Z" fill="#8a8a8a" /></svg>
                        <div className="mt-[7px] h-[140px] w-[11px] rounded-full bg-[#8a8a8a]" />
                      </div>
                    </div>
                  </div>

                  <div className="w-[1036px] shrink-0">
                    <div className="flex h-[54px] items-center justify-between rounded-[15px] bg-[#e7ebee] px-[10px]">
                      <h2 className="text-[24px] leading-[32px] font-semibold tracking-[-0.3px]">Güzergah Haritası</h2>
                      <span className="flex h-[34px] w-[214px] items-center justify-center rounded-full bg-[#1e40af] text-[17px] font-bold tracking-[-0.02px] whitespace-nowrap text-white">OTOGAR DOĞU GİRİŞİ</span>
                    </div>
                    <div className="relative mt-[20px] h-[300px] overflow-hidden rounded-[15px] border border-[#dee5ea] bg-[#add19e]">
                      <RouteMap />
                      <div className="absolute top-[12px] left-[13px]"><ZoomControl /></div>
                      <div className="absolute top-[12px] right-[12px]"><ZoomControl /></div>
                    </div>
                  </div>
                </div>
              </div>
            </section>
          </main>
        </div>

        <div className="flex w-[19px] flex-col items-center bg-[#2b2b2b] pt-[8px]">
          <svg viewBox="0 0 13 7" className="h-[7px] w-[13px]"><path d="M0 7L6.500 0L13 7Z" fill="#9f9f9f" /></svg>
          <div className="mt-[8px] h-[361px] w-[11px] rounded-full bg-[#9f9f9f]" />
          <svg viewBox="0 0 13 7" className="mt-auto mb-[8px] h-[7px] w-[13px]"><path d="M0 0L6.500 7L13 0Z" fill="#9f9f9f" /></svg>
        </div>
      </div>
    </div>
  );
}
